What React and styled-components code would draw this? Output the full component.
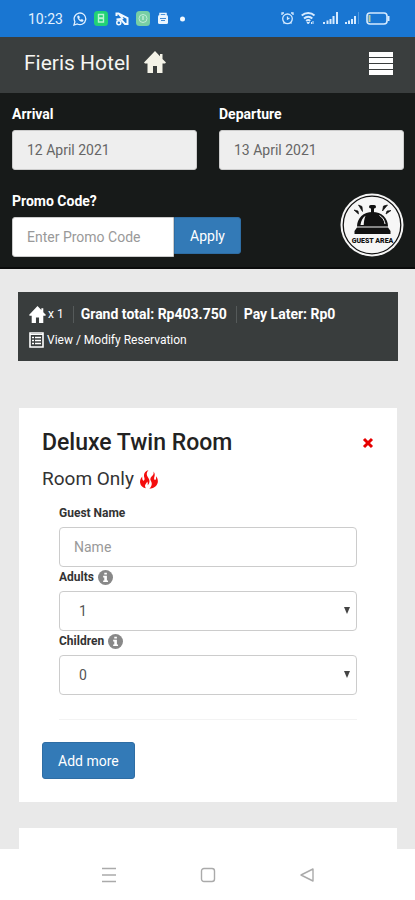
import React from "react";
import styled, { createGlobalStyle } from "styled-components";

const GlobalStyle = createGlobalStyle`
  * { box-sizing: border-box; }
  body { margin: 0; background: #e9e9e9; font-family: Roboto, "Liberation Sans", sans-serif; font-size: 14px; color: #222; }
  button, input, select { font-family: inherit; }
`;

const Screen = styled.div`
  display: flex;
  flex-direction: column;
  height: 100vh;
`;

const StatusBar = styled.div`
  display: flex;
  align-items: center;
  flex: none;
  height: 37px;
  padding: 0 25px 0 28px;
  background: #1976d2;
  color: #e3f1ff;
`;

const Clock = styled.span`
  width: 45px;
  font-size: 14px;
`;

const StatusGroup = styled.div`
  display: flex;
  align-items: center;
  gap: ${(p) => p.$gap}px;
  margin-left: ${(p) => (p.$end ? "auto" : "0")};
`;

const Header = styled.header`
  display: flex;
  align-items: center;
  flex: none;
  gap: 14px;
  height: 56px;
  padding: 0 22px 4px 24px;
  background: #3a3e3e;
  color: #f5f5f2;
`;

const HotelName = styled.h1`
  margin: 0;
  font-size: 21px;
  line-height: 28px;
  font-weight: 400;
`;

const HomeLink = styled.a`
  display: flex;
  padding-bottom: 3px;
  color: #f4f3e8;
`;

const IconButton = styled.button`
  display: flex;
  margin-left: auto;
  padding: 0;
  border: 0;
  background: none;
  color: ${(p) => p.$color};
  cursor: pointer;
`;

const Content = styled.main`
  flex: 1;
  min-height: 0;
  overflow-y: auto;
  scrollbar-width: none;
`;

const SearchPanel = styled.form`
  padding: 11px 11px 10px 12px;
  background: #171a19;
  border-bottom: 2px solid #0b0c0c;
  color: #fff;
`;

const DateGrid = styled.div`
  display: grid;
  grid-template-columns: 1fr 1fr;
  gap: 22px;
`;

const SearchLabel = styled.label`
  display: block;
  margin-bottom: 6px;
  font-size: 14px;
  line-height: 20px;
  font-weight: 700;
`;

const SearchInput = styled.input`
  display: block;
  width: 100%;
  min-width: 0;
  height: 40px;
  padding: 0 14px;
  border: 1px solid #ccc;
  border-radius: ${(p) => (p.$joined ? "3px 0 0 3px" : "3px")};
  background: ${(p) => (p.$joined ? "#fff" : "#eee")};
  color: #666;
  font-size: 14px;
  &::placeholder { color: #999; opacity: 1; }
`;

const PromoRow = styled.div`
  display: flex;
  align-items: flex-end;
  justify-content: space-between;
  margin-top: 21px;
`;

const PromoField = styled.div`
  width: 229px;
`;

const InputGroup = styled.div`
  display: flex;
  align-items: flex-start;
`;

const PrimaryButton = styled.button`
  flex: none;
  height: 37px;
  padding: 0 15px;
  border: 1px solid #2e6da4;
  border-radius: ${(p) => (p.$joined ? "0 3px 3px 0" : "3px")};
  background: #337ab7;
  color: #fff;
  font-size: 14px;
  cursor: pointer;
`;

const GuestLink = styled.a`
  display: flex;
`;

const Summary = styled.section`
  margin: 23px 17px 47px 18px;
  padding: 9px 12px 8px 11px;
  min-height: 69px;
  background: #393d3d;
  color: #fff;
`;

const SummaryLine = styled.div`
  display: flex;
  align-items: center;
  height: 26px;
`;

const RoomCount = styled.span`
  display: flex;
  align-items: center;
  gap: 2px;
  padding-right: 9px;
  font-size: 12px;
`;

const SummaryItem = styled.strong`
  padding: 0 9px 0 7px;
  border-left: 1px solid #555a5a;
  line-height: 17px;
  font-size: 14px;
`;

const ReservationLink = styled.a`
  display: flex;
  align-items: center;
  gap: 3px;
  color: #fff;
  font-size: 12px;
  text-decoration: none;
`;

const Card = styled.section`
  margin: 0 18px 26px 19px;
  padding: 21px 23px 23px;
  min-height: 80px;
  background: #fff;
`;

const CardHeader = styled.div`
  display: flex;
  align-items: center;
  justify-content: space-between;
`;

const RoomName = styled.h2`
  margin: 0;
  font-size: 23px;
  line-height: 28px;
  font-weight: 500;
`;

const RatePlan = styled.h3`
  display: flex;
  align-items: center;
  gap: 6px;
  margin: 9px 0 11px;
  font-size: 19px;
  line-height: 26px;
  font-weight: 400;
  color: #333;
`;

const Fields = styled.div`
  padding: 0 17px;
`;

const FieldLabel = styled.label`
  display: flex;
  align-items: center;
  gap: 4px;
  height: 24px;
  padding-bottom: 4px;
  font-size: 12px;
  font-weight: 700;
  color: #333;
`;

const FieldInput = styled.input`
  display: block;
  width: 100%;
  height: 40px;
  padding: 0 14px;
  border: 1px solid #ccc;
  border-radius: 4px;
  background: #fff;
  font-size: 14px;
  &::placeholder { color: #999; opacity: 1; }
`;

const SelectWrap = styled.div`
  position: relative;
`;

const FieldSelect = styled.select`
  display: block;
  width: 100%;
  height: 40px;
  padding: 0 19px;
  border: 1px solid #ccc;
  border-radius: 4px;
  background: #fff;
  color: #555;
  font-size: 14px;
  appearance: none;
`;

const Arrow = styled.svg`
  position: absolute;
  top: 16px;
  right: 6px;
  pointer-events: none;
`;

const Divider = styled.hr`
  height: 1px;
  margin: 24px 0 22px;
  border: 0;
  background: #f3f3f3;
`;

const NavBar = styled.nav`
  display: flex;
  align-items: center;
  justify-content: center;
  flex: none;
  gap: 83px;
  height: 51px;
  background: #fff;
`;

const NavButton = styled.button`
  display: flex;
  padding: 0;
  border: 0;
  background: none;
`;

const HomeIcon = ({ w, h }) => (
  <svg width={w} height={h} viewBox="0 0 22 22" preserveAspectRatio="none" fill="currentColor" aria-hidden="true">
    <path d="M11 0 0 11.500 1 12.500h2.500V22h5.500v-7h4v7h5.500v-9.500H21l1-1L18.500 8V3h-2.500v2.300z" />
  </svg>
);

const ListIcon = () => (
  <svg width="15" height="16" viewBox="0 0 15 16" fill="none" stroke="#fff" aria-hidden="true">
    <path d="M1 1h13v14H1z" strokeWidth="1.6" />
    <path d="M1 2.5h13" />
    <path d="M3 5.5h2M3 8.5h2M3 11.5h2M6 5.5h6M6 8.5h6M6 11.5h6" strokeWidth="1.5" />
  </svg>
);

const InfoIcon = () => (
  <svg width="15" height="15" viewBox="0 0 16 16" aria-hidden="true">
    <circle cx="8" cy="8" r="8" fill="#888" />
    <path d="M6.7 2.8h2.8v2.1H6.7zM5.5 6.2h4v4.9h1.2v1.7H5.5v-1.7h1.2V7.9H5.5z" fill="#fff" />
  </svg>
);

const FireIcon = () => (
  <svg width="18" height="19" viewBox="0 0 18 19" fill="#f40d0d" aria-hidden="true">
    <path d="M8.500 0C4.500 1.500 3.300 4.500 4.300 7.500c.5 1.500.3 2.800-.6 3.300C2.500 10.500 2 9 2.300 6.500.6 8.200-.2 10.500.1 12.800.5 16 3 18 6 18.300c-1-1.200-1.200-2.300-.7-3.500.5-1.300 1.500-2 1.800-3.300.7 1 .9 2.300.5 3.800 1.200-1 1.900-2.500 1.900-4.300 0-2.400-1.700-3.500-2.400-5.300C6.400 3.900 6.900 2 8.500 0z" />
    <path d="M13.300 1.500c1 2.200-.3 3.700-1.700 5-1.300 1.300-1.700 2.800-.8 4.300.8 1.300 1.200 2.600.8 4.200-.3 1.500-1.200 2.700-2.300 3.800 4-.4 7.500-2.300 8.400-6 .5-2.300-.1-4.700-1.700-6.500.3 1.800.1 3.200-1 3.700-1-.3-1.100-1.500-.7-3C15 4.800 14.900 2.800 13.300 1.500z" />
  </svg>
);

const GuestAreaIcon = () => (
  <svg width="64" height="64" viewBox="0 0 64 64" role="img" aria-label="Guest area">
    <circle cx="32" cy="32" r="31.500" fill="#f6f6f6" />
    <circle cx="32" cy="32" r="28.800" fill="none" stroke="#111" strokeWidth="1.300" />
    <rect x="29" y="12" width="7" height="3.600" rx="1.800" fill="#111" />
    <path d="M31 15h3v5h-3z" fill="#111" />
    <path d="M17 33.500c0-8.500 6.500-14.500 15.500-14.500S48 25 48 33.500z" fill="#111" />
    <path d="M20.500 32c.5-4.500 2.300-7.500 5-9.300-1.200 3-1.600 6-1.800 9.300z" fill="#f6f6f6" />
    <path d="M39.500 22.500c3.200 1.800 5 4.800 5.500 8.500" fill="none" stroke="#f6f6f6" />
    <path d="M17 34.500h31l2.500 3.500h-36z" fill="#111" />
    <path d="M14.500 38h36v3h-36z" fill="#111" />
    <path d="m18.500 12 3.500 1.500.5 5zM14 17l4 1 .5 3zM47.500 12l-4 1-1 5zM51 17.500l-4 .5-1 3z" fill="#111" stroke="#111" strokeWidth=".7" />
    <text x="32.500" y="49.500" textAnchor="middle" fontFamily="Roboto, sans-serif" fontSize="7" fontWeight="900" fill="#111">GUEST AREA</text>
  </svg>
);

const AppIcons = () => (
  <StatusGroup $gap={7} aria-hidden="true">
    <svg width="14" height="14" viewBox="0 0 14 14" fill="none" stroke="#e3f1ff">
      <path d="m1 13 .9-3.300A5.800 5.800 0 1 1 4.300 12z" strokeWidth="1.300" />
      <path d="M4.500 4.200c0 3 2.300 5.300 5.200 5.400l.6-1.500-1.700-.8-.8.800C6.800 7.700 6.200 7 5.900 6.200l.7-.8-.7-1.600z" fill="#e3f1ff" strokeWidth=".5" />
    </svg>
    <svg width="14" height="15" viewBox="0 0 14 15">
      <rect width="14" height="15" rx="3.500" fill="#22d276" />
      <path d="M4.500 3.500h5v3.500h-5zM4.500 7.500h5V11h-5z" fill="none" stroke="#b9f5d3" strokeWidth="1.400" />
    </svg>
    <svg width="14" height="14" viewBox="0 0 14 14" fill="none" stroke="#f2f9ff" strokeWidth="2">
      <path d="M1.500 4V1.500h2L12.500 6v6H10L5.500 7 1.500 7.500M4 2l4 5" />
      <circle cx="3.800" cy="10.800" r="2" strokeWidth="1.500" />
    </svg>
    <svg width="14" height="15" viewBox="0 0 14 15">
      <rect width="14" height="15" rx="3.500" fill="#78cfa5" />
      <circle cx="7" cy="7.500" r="4" fill="none" stroke="#c1edd7" />
      <path d="M7 5v4" stroke="#c1edd7" strokeWidth="1.500" />
    </svg>
    <svg width="12" height="13" viewBox="0 0 12 13">
      <path d="M3 3V1.500h6V3" fill="none" stroke="#e9f5ff" strokeWidth="1.500" />
      <rect x="1" y="3" width="10" height="9" rx="1.500" fill="#e9f5ff" />
      <path d="M3 6.500h6M4 8.500h4" stroke="#418bd4" />
    </svg>
    <svg width="12" height="6" viewBox="0 0 12 6"><circle cx="6.500" cy="3" r="2.500" fill="#f2f9ff" /></svg>
  </StatusGroup>
);

const DeviceIcons = () => (
  <StatusGroup $end $gap={7} aria-hidden="true">
    <svg width="13" height="13" viewBox="0 0 13 13" fill="none" stroke="#d5eaff" strokeWidth="1.300">
      <circle cx="6.500" cy="6.800" r="4.800" />
      <path d="M1 3V1h2M10 1h2v2M2.500 11.500l1-1M10.500 11.500l-1-1M6.500 4.500v2.700l2-1.200" />
    </svg>
    <svg width="15" height="13" viewBox="0 0 15 13" fill="none" stroke="#d5eaff" strokeWidth="2">
      <path d="M.7 3.500C4.500.3 10 .3 13.500 3.500M3 6.500c2.500-2.200 6-2.200 8.300 0M5.200 9c1.300-1.200 2.800-1.200 4 0" />
      <path d="M6 10.500h2.500L7.200 12zM12 9v3M10.500 10v2" strokeWidth="1" />
    </svg>
    <svg width="15" height="13" viewBox="0 0 15 13" fill="#d5eaff">
      <path d="M0 10h2v2H0zM3.500 8.500h2V12h-2zM6.500 7h2v5h-2zM9.500 4h2v8h-2zM13 0h2v12h-2z" />
    </svg>
    <svg width="14" height="13" viewBox="0 0 14 13" fill="#d5eaff">
      <path d="M0 10h2v2H0zM3 8.500h2V12H3zM6 7h2v5H6zM9 4h2v8H9z" /><path d="M13 0h1v12h-1z" opacity=".3" />
    </svg>
    <svg width="24" height="13" viewBox="0 0 24 13" fill="none" stroke="#d5eaff">
      <rect x="1" y="1" width="20" height="11" rx="3" strokeWidth="1.600" />
      <path d="M22.500 4v5" strokeWidth="2" />
      <path d="M3.500 3v7" stroke="#b9c8a0" strokeWidth="2" />
    </svg>
  </StatusGroup>
);

const CountField = ({ id, label, value, options }) => (
  <>
    <FieldLabel htmlFor={id}>{label}<InfoIcon /></FieldLabel>
    <SelectWrap>
      <FieldSelect id={id} defaultValue={value}>
        {options.map((n) => <option key={n}>{n}</option>)}
      </FieldSelect>
      <Arrow width="8" height="7" viewBox="0 0 8 7" fill="#444" aria-hidden="true"><path d="M1 0h6L4 7z" /></Arrow>
    </SelectWrap>
  </>
);

export default function App() {
  return (
    <Screen>
      <GlobalStyle />
      <StatusBar>
        <Clock>10:23</Clock>
        <AppIcons />
        <DeviceIcons />
      </StatusBar>
      <Header>
        <HotelName>Fieris Hotel</HotelName>
        <HomeLink href="#home" aria-label="Home"><HomeIcon w={22} h={22} /></HomeLink>
        <IconButton type="button" aria-label="Menu" $color="#fff">
          <svg width="24" height="23" viewBox="0 0 24 23" fill="currentColor"><path d="M0 0h24v5H0zM0 6h24v5H0zM0 12h24v5H0zM0 18h24v5H0z" /></svg>
        </IconButton>
      </Header>
      <Content>
        <SearchPanel onSubmit={(e) => e.preventDefault()}>
          <DateGrid>
            <div>
              <SearchLabel htmlFor="arrival">Arrival</SearchLabel>
              <SearchInput id="arrival" readOnly value="12 April 2021" />
            </div>
            <div>
              <SearchLabel htmlFor="departure">Departure</SearchLabel>
              <SearchInput id="departure" readOnly value="13 April 2021" />
            </div>
          </DateGrid>
          <PromoRow>
            <PromoField>
              <SearchLabel htmlFor="promo">Promo Code?</SearchLabel>
              <InputGroup>
                <SearchInput id="promo" $joined placeholder="Enter Promo Code" />
                <PrimaryButton $joined type="submit">Apply</PrimaryButton>
              </InputGroup>
            </PromoField>
            <GuestLink href="#guest"><GuestAreaIcon /></GuestLink>
          </PromoRow>
        </SearchPanel>
        <Summary>
          <SummaryLine>
            <RoomCount><HomeIcon w={17} h={17} />x 1</RoomCount>
            <SummaryItem>Grand total: Rp403.750</SummaryItem>
            <SummaryItem>Pay Later: Rp0</SummaryItem>
          </SummaryLine>
          <SummaryLine>
            <ReservationLink href="#reservation"><ListIcon />View / Modify Reservation</ReservationLink>
          </SummaryLine>
        </Summary>
        <Card>
          <CardHeader>
            <RoomName>Deluxe Twin Room</RoomName>
            <IconButton type="button" aria-label="Remove room" $color="#e60000">
              <svg width="12" height="12" viewBox="0 0 12 12" fill="none" stroke="currentColor" strokeWidth="3"><path d="m2 2 8 8M10 2l-8 8" /></svg>
            </IconButton>
          </CardHeader>
          <RatePlan>Room Only <FireIcon /></RatePlan>
          <Fields>
            <FieldLabel htmlFor="guest">Guest Name</FieldLabel>
            <FieldInput id="guest" placeholder="Name" />
            <CountField id="adults" label="Adults" value="1" options={["1", "2"]} />
            <CountField id="children" label="Children" value="0" options={["0", "1", "2"]} />
            <Divider />
          </Fields>
          <PrimaryButton type="button">Add more</PrimaryButton>
        </Card>
        <Card />
      </Content>
      <NavBar aria-label="System">
        <NavButton type="button" aria-label="Recent apps">
          <svg width="16" height="16" viewBox="0 0 16 16" stroke="#aaa" strokeWidth="1.400"><path d="M1 1.500h14M1 8h14M1 14.500h14" /></svg>
        </NavButton>
        <NavButton type="button" aria-label="Home screen">
          <svg width="16" height="16" viewBox="0 0 16 16" fill="none" stroke="#aaa" strokeWidth="1.400"><rect x="1.500" y="1.500" width="13" height="13" rx="2.500" /></svg>
        </NavButton>
        <NavButton type="button" aria-label="Back">
          <svg width="16" height="16" viewBox="0 0 16 16" fill="none" stroke="#aaa" strokeWidth="1.400"><path d="M14 2v12L2 8z" strokeLinejoin="round" /></svg>
        </NavButton>
      </NavBar>
    </Screen>
  );
}
